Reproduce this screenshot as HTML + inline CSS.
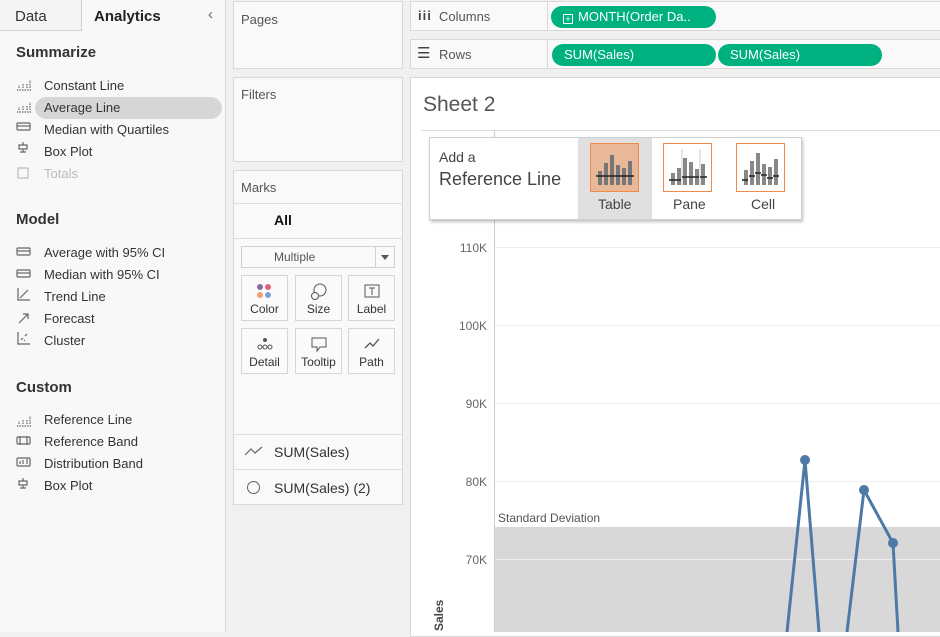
<!DOCTYPE html>
<html><head><meta charset="utf-8"><style>
*{margin:0;padding:0;box-sizing:border-box}
body{width:940px;height:632px;overflow:hidden;background:#f0f0f0;font-family:"Liberation Sans",sans-serif;color:#333;position:relative}
.a{position:absolute}
.box{position:absolute;background:#f9f9f9;border:1px solid #d8d8d8}
.t{position:absolute;font-size:13px;white-space:nowrap}
.pill{position:absolute;background:#00b180;color:#fff;font-size:13px;border-radius:11px;height:22px;line-height:22px;padding-left:12px}
.btn{position:absolute;width:47px;height:46px;border:1px solid #d6d6d6;background:#fafafa;font-size:12px;text-align:center}
.btn span{position:absolute;left:0;right:0;bottom:4px}
.ic{position:absolute;left:18px;font-size:11px;color:#555}
</style></head><body>
<!-- left panel -->
<div class="a" style="left:0;top:0;width:226px;height:632px;background:#f8f8f8;border-right:1px solid #d8d8d8"></div>
<div class="a" style="left:0;top:0;width:82px;height:31px;border-right:1px solid #d0d0d0;border-bottom:1px solid #d0d0d0;background:#f4f4f4"></div>
<div class="t" style="left:15px;top:8px;font-size:15px">Data</div>
<div class="t" style="left:94px;top:8px;font-size:15px;font-weight:bold;color:#222">Analytics</div>
<div class="t" style="left:208px;top:6px;font-size:15px;color:#666">&#8249;</div>
<div class="t" style="left:16px;top:44px;font-size:15px;font-weight:bold">Summarize</div>
<div class="a" style="left:35px;top:97px;width:187px;height:22px;border-radius:11px;background:#d6d6d6"></div>
<div class="t" style="left:44px;top:78px">Constant Line</div>
<div class="t" style="left:44px;top:100px">Average Line</div>
<div class="t" style="left:44px;top:122px">Median with Quartiles</div>
<div class="t" style="left:44px;top:144px">Box Plot</div>
<div class="t" style="left:44px;top:166px;color:#bbb">Totals</div>
<div class="t" style="left:16px;top:211px;font-size:15px;font-weight:bold">Model</div>
<div class="t" style="left:44px;top:245px">Average with 95% CI</div>
<div class="t" style="left:44px;top:267px">Median with 95% CI</div>
<div class="t" style="left:44px;top:289px">Trend Line</div>
<div class="t" style="left:44px;top:311px">Forecast</div>
<div class="t" style="left:44px;top:333px">Cluster</div>
<div class="t" style="left:16px;top:379px;font-size:15px;font-weight:bold">Custom</div>
<div class="t" style="left:44px;top:412px">Reference Line</div>
<div class="t" style="left:44px;top:434px">Reference Band</div>
<div class="t" style="left:44px;top:456px">Distribution Band</div>
<div class="t" style="left:44px;top:478px">Box Plot</div>
<svg class="a" style="left:15px;top:76px" width="20" height="420" fill="none" stroke="#666" stroke-width="1.2">
<g id="rl"><path d="M2 14h14M4 12v-3M8 12v-5M12 12v-4M15 12v-8" stroke-dasharray="1.5 1"/></g>
<use href="#rl" y="22"/>
<rect x="2" y="47" width="13" height="7" rx="1"/><path d="M2 50h13"/>
<path d="M8 66v3M4 69h8v4H4zM8 73v3M5 76h6"/>
<rect x="3" y="92" width="10" height="10" stroke="#bbb"/>
<rect x="2" y="172" width="13" height="7" rx="1"/><path d="M2 175h13"/>
<rect x="2" y="194" width="13" height="7" rx="1"/><path d="M2 197h13"/>
<path d="M3 212v12h12M5 222l8-8"/>
<path d="M4 247l9-9M8 238h5v5"/>
<path d="M3 256v12h12M6 264l2-2M10 260l2-2M9 265l1-1"/>
<use href="#rl" y="336"/>
<rect x="2" y="361" width="13" height="7" rx="1"/><path d="M5 360v9M12 360v9"/>
<rect x="2" y="382" width="13" height="8" rx="1"/><path d="M5 388v-3M8 388v-4M12 388v-5"/>
<path d="M8 402v3M4 405h8v4H4zM8 409v3M5 412h6"/>
</svg>
<!-- middle column -->
<div class="box" style="left:233px;top:1px;width:170px;height:68px"></div>
<div class="t" style="left:241px;top:12px;color:#555">Pages</div>
<div class="box" style="left:233px;top:77px;width:170px;height:85px"></div>
<div class="t" style="left:241px;top:87px;color:#555">Filters</div>
<div class="box" style="left:233px;top:170px;width:170px;height:335px"></div>
<div class="t" style="left:241px;top:180px;color:#555">Marks</div>
<div class="a" style="left:234px;top:203px;width:168px;height:1px;background:#dcdcdc"></div>
<div class="t" style="left:274px;top:212px;font-weight:bold;color:#111;font-size:14px">All</div>
<div class="a" style="left:234px;top:238px;width:168px;height:1px;background:#dcdcdc"></div>
<div class="a" style="left:241px;top:246px;width:154px;height:22px;border:1px solid #d0d0d0;background:#fafafa"></div>
<div class="t" style="left:274px;top:250px;font-size:12px;color:#555">Multiple</div>
<div class="a" style="left:375px;top:247px;width:1px;height:20px;background:#d0d0d0"></div>
<div class="a" style="left:381px;top:255px;border:4px solid transparent;border-top:5px solid #555"></div>
<div class="btn" style="left:241px;top:275px"><svg width="20" height="20" style="margin-top:6px"><circle cx="5" cy="5" r="3" fill="#8a6a9c"/><circle cx="13" cy="5" r="3" fill="#e0607a"/><circle cx="5" cy="13" r="3" fill="#f0a070"/><circle cx="13" cy="13" r="3" fill="#7aa3cf"/></svg><span>Color</span></div>
<div class="btn" style="left:295px;top:275px"><svg width="20" height="20" style="margin-top:6px" fill="none" stroke="#555"><circle cx="11" cy="8" r="6"/><circle cx="6" cy="14" r="3.5" fill="#fafafa"/></svg><span>Size</span></div>
<div class="btn" style="left:348px;top:275px"><svg width="20" height="20" style="margin-top:6px" fill="none" stroke="#555"><rect x="3" y="3" width="14" height="12"/><path d="M7 6h6M10 6v7"/></svg><span>Label</span></div>
<div class="btn" style="left:241px;top:328px"><svg width="20" height="20" style="margin-top:6px" fill="none" stroke="#555"><circle cx="10" cy="5" r="1.5" fill="#555"/><circle cx="5" cy="12" r="2"/><circle cx="10" cy="12" r="2"/><circle cx="15" cy="12" r="2"/></svg><span>Detail</span></div>
<div class="btn" style="left:295px;top:328px"><svg width="20" height="20" style="margin-top:6px" fill="none" stroke="#555"><path d="M3 3h14v9h-6l-3 4v-4H3z"/></svg><span>Tooltip</span></div>
<div class="btn" style="left:348px;top:328px"><svg width="20" height="20" style="margin-top:6px" fill="none" stroke="#555" stroke-width="1.3"><path d="M3 13l5-5 3 3 6-7"/></svg><span>Path</span></div>
<div class="a" style="left:234px;top:434px;width:168px;height:1px;background:#dcdcdc"></div>
<svg class="a" style="left:244px;top:444px" width="20" height="14" fill="none" stroke="#666" stroke-width="1.2"><path d="M1 11l6-6 4 4 7-6"/></svg>
<div class="t" style="left:274px;top:444px;font-size:14px">SUM(Sales)</div>
<div class="a" style="left:234px;top:469px;width:168px;height:1px;background:#dcdcdc"></div>
<div class="a" style="left:247px;top:481px;width:13px;height:13px;border:1.3px solid #666;border-radius:50%"></div>
<div class="t" style="left:274px;top:480px;font-size:14px">SUM(Sales) (2)</div>
<!-- shelves -->
<div class="box" style="left:410px;top:1px;width:531px;height:30px"></div>
<div class="a" style="left:547px;top:1px;width:1px;height:30px;background:#d8d8d8"></div>
<div class="t" style="left:418px;top:8px;font-weight:bold;font-size:13px;color:#444;letter-spacing:1px">iii</div>
<div class="t" style="left:439px;top:9px;color:#555">Columns</div>
<div class="pill" style="left:551px;top:6px;width:165px"><span style="display:inline-block;width:10px;height:10px;border:1px solid #fff;font-size:9px;line-height:8px;text-align:center;margin-right:5px;vertical-align:-1px">+</span>MONTH(Order Da..</div>
<div class="box" style="left:410px;top:39px;width:531px;height:30px"></div>
<div class="a" style="left:547px;top:39px;width:1px;height:30px;background:#d8d8d8"></div>
<div class="t" style="left:417px;top:44px;font-size:15px;color:#444">&#9776;</div>
<div class="t" style="left:439px;top:47px;color:#555">Rows</div>
<div class="pill" style="left:552px;top:44px;width:164px">SUM(Sales)</div>
<div class="pill" style="left:718px;top:44px;width:164px">SUM(Sales)</div>
<!-- sheet -->
<div class="a" style="left:410px;top:77px;width:531px;height:560px;background:#fff;border:1px solid #d8d8d8"></div>
<div class="t" style="left:423px;top:93px;font-size:21px;color:#555">Sheet 2</div>
<svg class="a" style="left:411px;top:78px" width="529" height="554">
<path d="M10 52.5h519" stroke="#ddd"/>
<path d="M83.5 52v502" stroke="#ccc"/>
<g stroke="#eee"><path d="M84 169.5h445M84 247.5h445M84 325.5h445M84 403.5h445"/></g>
<rect x="84" y="449" width="445" height="105" fill="#d8d8d8"/>
<path d="M84 481.5h445" stroke="#eee"/>
<g font-family="Liberation Sans" font-size="12" fill="#666" text-anchor="end"><text x="76" y="174">110K</text><text x="76" y="252">100K</text><text x="76" y="330">90K</text><text x="76" y="408">80K</text><text x="76" y="486">70K</text></g>
<text x="87" y="444" font-family="Liberation Sans" font-size="12" fill="#555">Standard Deviation</text>
<text transform="translate(32 553) rotate(-90)" font-family="Liberation Sans" font-size="12" font-weight="bold" fill="#444">Sales</text>
<g stroke="#4e79a7" stroke-width="3" fill="none" stroke-linejoin="round"><path d="M376 554L394 382L408 554M436 554L453 412L482 465L487 554"/></g>
<g fill="#4e79a7"><circle cx="394" cy="382" r="5"/><circle cx="453" cy="412" r="5"/><circle cx="482" cy="465" r="5"/></g>
</svg>
<!-- popup -->
<div class="a" style="left:429px;top:137px;width:373px;height:83px;background:#fff;border:1px solid #d0d0d0;box-shadow:1px 2px 3px rgba(0,0,0,.25)"></div>
<div class="a" style="left:578px;top:138px;width:74px;height:81px;background:#e0e0e0"></div>
<div class="t" style="left:439px;top:149px;font-size:14px;color:#444">Add a</div>
<div class="t" style="left:439px;top:169px;font-size:18px;color:#444">Reference Line</div>
<svg class="a" style="left:590px;top:143px" width="200" height="50">
<rect x="0.5" y="0.5" width="48" height="48" fill="#e8b898" stroke="#f08a4b"/>
<g fill="#777"><rect x="8" y="28" width="4" height="14"/><rect x="14" y="20" width="4" height="22"/><rect x="20" y="12" width="4" height="30"/><rect x="26" y="22" width="4" height="20"/><rect x="32" y="25" width="4" height="17"/><rect x="38" y="18" width="4" height="24"/></g>
<path d="M6 33h38" stroke="#222" stroke-width="1.5"/>
<rect x="73.5" y="0.5" width="48" height="48" fill="#fff" stroke="#f08a4b"/>
<g fill="#888"><rect x="81" y="30" width="4" height="12"/><rect x="87" y="25" width="4" height="17"/><rect x="93" y="15" width="4" height="27"/><rect x="99" y="19" width="4" height="23"/><rect x="105" y="26" width="4" height="16"/><rect x="111" y="21" width="4" height="21"/></g>
<path d="M92 6v36M110 6v36" stroke="#ccc"/>
<path d="M79 37h12M92 34h17M110 34h7" stroke="#222" stroke-width="1.5"/>
<rect x="146.5" y="0.5" width="48" height="48" fill="#fff" stroke="#f08a4b"/>
<g fill="#888"><rect x="154" y="27" width="4" height="15"/><rect x="160" y="18" width="4" height="24"/><rect x="166" y="10" width="4" height="32"/><rect x="172" y="21" width="4" height="21"/><rect x="178" y="24" width="4" height="18"/><rect x="184" y="16" width="4" height="26"/></g>
<path d="M152 37h6M159 33h6M165 30h6M171 32h6M177 35h6M183 33h6" stroke="#222" stroke-width="1.5"/>
</svg>
<div class="t" style="left:598px;top:196px;font-size:14px;color:#444">Table</div>
<div class="t" style="left:673px;top:196px;font-size:14px;color:#444">Pane</div>
<div class="t" style="left:751px;top:196px;font-size:14px;color:#444">Cell</div>
</body></html>
